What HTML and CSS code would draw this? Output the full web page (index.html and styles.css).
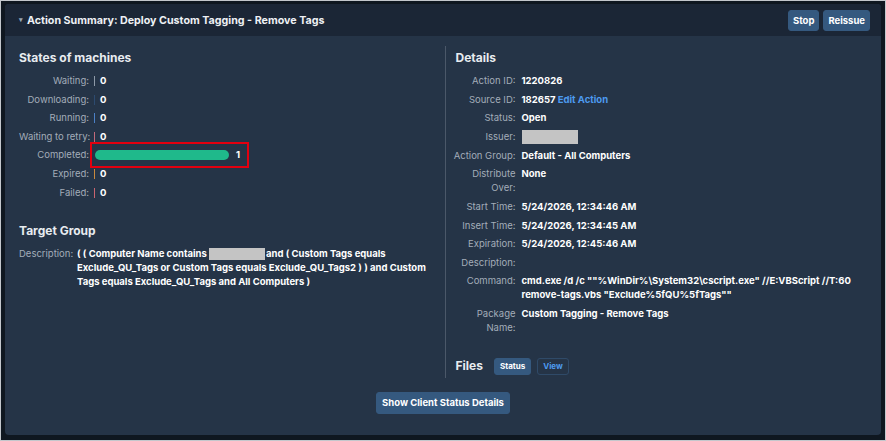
FILE: index.html
```html
<!DOCTYPE html>
<html lang="en">
<head>
  <meta charset="UTF-8">
  <meta name="viewport" content="width=device-width, initial-scale=1.0">
  <title>Action Summary</title>
  <link rel="stylesheet" href="styles.css">
</head>
<body>
  <div class="frame">
    <div class="panel">
      <div class="panel-header">
        <h1 class="panel-title"><span class="caret">&#9662;</span>Action Summary: Deploy Custom Tagging - Remove Tags</h1>
        <div class="header-buttons">
          <button class="btn">Stop</button>
          <button class="btn">Reissue</button>
        </div>
      </div>

      <div class="panel-body">
        <div class="columns">
          <div class="col col-left">
            <h2>States of machines</h2>
            <div class="states">
              <span class="label">Waiting:</span><span class="value"><i class="mark mark-waiting"></i>0</span>
              <span class="label">Downloading:</span><span class="value"><i class="mark mark-downloading"></i>0</span>
              <span class="label">Running:</span><span class="value"><i class="mark mark-running"></i>0</span>
              <span class="label">Waiting to retry:</span><span class="value"><i class="mark mark-retry"></i>0</span>
              <span class="label">Completed:</span><span class="value"><span class="highlight"><i class="bar"></i>1</span></span>
              <span class="label">Expired:</span><span class="value"><i class="mark mark-expired"></i>0</span>
              <span class="label">Failed:</span><span class="value"><i class="mark mark-failed"></i>0</span>
            </div>

            <h2 class="target-heading">Target Group</h2>
            <div class="target">
              <span class="label">Description:</span>
              <span class="value">( ( Computer Name contains <i class="redacted redacted-name"></i>and ( Custom Tags equals Exclude_QU_Tags or Custom Tags equals Exclude_QU_Tags2 ) ) and Custom Tags equals Exclude_QU_Tags and All Computers )</span>
            </div>
          </div>

          <div class="col col-right">
            <h2>Details</h2>
            <div class="details">
              <span class="label">Action ID:</span><span class="value">1220826</span>
              <span class="label">Source ID:</span><span class="value">182657 <a class="link" href="#">Edit Action</a></span>
              <span class="label">Status:</span><span class="value">Open</span>
              <span class="label">Issuer:</span><span class="value"><i class="redacted redacted-issuer"></i></span>
              <span class="label">Action Group:</span><span class="value">Default - All Computers</span>
              <span class="label">Distribute Over:</span><span class="value">None</span>
              <span class="label">Start Time:</span><span class="value">5/24/2026, 12:34:46 AM</span>
              <span class="label">Insert Time:</span><span class="value">5/24/2026, 12:34:45 AM</span>
              <span class="label">Expiration:</span><span class="value">5/24/2026, 12:45:46 AM</span>
              <span class="label">Description:</span><span class="value"></span>
              <span class="label">Command:</span><span class="value">cmd.exe /d /c ""%WinDir%\System32\cscript.exe" //E:VBScript //T:60 remove-tags.vbs "Exclude%5fQU%5fTags""</span>
              <span class="label">Package Name:</span><span class="value">Custom Tagging - Remove Tags</span>
            </div>

            <div class="files">
              <h2>Files</h2>
              <button class="btn btn-small">Status</button>
              <button class="btn btn-small btn-outline">View</button>
            </div>
          </div>
        </div>

        <div class="panel-footer">
          <button class="btn btn-wide">Show Client Status Details</button>
        </div>
      </div>
    </div>
  </div>
</body>
</html>
```

FILE: styles.css
```css
html, body {
  margin: 0;
  padding: 0;
  height: 100%;
}

body {
  background-color: #c3c7cc;
  font-family: Inter, "Noto Sans", Arial, sans-serif;
  font-size: 9.5px;
  color: #ffffff;
  padding: 1px;
  box-sizing: border-box;
}

.frame {
  height: 100%;
  background-color: #0f1720;
  padding: 3px 4px 5px 4px;
  box-sizing: border-box;
}

.panel {
  height: 100%;
  display: flex;
  flex-direction: column;
  background-color: #253447;
  border-radius: 4px;
  overflow: hidden;
}

.panel-header {
  display: flex;
  align-items: center;
  justify-content: space-between;
  height: 32px;
  padding: 0 11px 0 14px;
  background-color: #1b2636;
}

.panel-title {
  margin: 0;
  font-size: 10.7px;
  font-weight: 700;
  color: #eef1f5;
}

.caret {
  font-size: 7px;
  color: #9aa6b4;
  margin-right: 4px;
  vertical-align: 2px;
}

.header-buttons {
  display: flex;
  gap: 4px;
}

.btn {
  font-family: inherit;
  font-size: 9.5px;
  font-weight: 700;
  color: #ffffff;
  background-color: #35597f;
  border: 1px solid #35597f;
  border-radius: 3px;
  height: 21px;
  padding: 0 4px;
  cursor: pointer;
}

.btn-small {
  height: 17px;
  font-size: 8px;
  padding: 0 5px;
}

.btn-outline {
  background-color: transparent;
  border-color: #2f4a68;
  color: #4d9bf0;
}

.btn-wide {
  height: 22px;
  padding: 0 5px;
}

.panel-body {
  flex: 1;
  display: flex;
  flex-direction: column;
  padding-top: 10px;
}

.columns {
  display: flex;
}

.col {
  flex: 1;
}

.col-left {
  padding-left: 14px;
}

.col-right {
  border-left: 1px solid #4b5869;
  padding-left: 10px;
}

h2 {
  margin: 0 0 8px 0;
  font-size: 12px;
  font-weight: 700;
  color: #e8ecf0;
  line-height: 16px;
  padding-top: 4px;
}

.label {
  color: #a3adb9;
  text-align: right;
}

.value {
  font-weight: 700;
  color: #ffffff;
}

.states {
  display: grid;
  grid-template-columns: 70px 1fr;
  column-gap: 5px;
  row-gap: 4.6px;
  line-height: 14px;
}

.states .label {
  white-space: nowrap;
}

.states .value {
  display: flex;
  align-items: center;
}

.mark {
  display: inline-block;
  width: 1px;
  height: 10px;
  margin-right: 5px;
}

.mark-waiting { background-color: #8e9aa8; }
.mark-downloading { background-color: #2d4b70; }
.mark-running { background-color: #4b80c6; }
.mark-retry { background-color: #c06a7a; }
.mark-expired { background-color: #c8883e; }
.mark-failed { background-color: #c9646f; }

.highlight {
  display: inline-flex;
  align-items: center;
  border: 2px solid #e3000f;
  margin: -6px 0 -6px -4px;
  padding: 4px 7px 4px 3px;
}

.bar {
  display: inline-block;
  width: 134px;
  height: 10px;
  border-radius: 5px;
  background-color: #1fb98b;
  margin-right: 7px;
}

.target-heading {
  margin-top: 19px;
}

.target {
  display: grid;
  grid-template-columns: 51px 1fr;
  column-gap: 7px;
  line-height: 14px;
  padding-right: 14px;
}

.redacted {
  display: inline-block;
  background-color: #c4c4c4;
  vertical-align: middle;
}

.redacted-name {
  width: 56px;
  height: 12px;
  margin-right: 1px;
}

.redacted-issuer {
  width: 56px;
  height: 14px;
}

.details {
  display: grid;
  grid-template-columns: 64px 1fr;
  column-gap: 6px;
  row-gap: 4.6px;
  line-height: 14px;
  margin-left: -4px;
  padding-right: 8px;
}

.link {
  color: #4d9bf0;
  text-decoration: none;
}

.files {
  display: flex;
  align-items: center;
  gap: 6px;
  margin-top: 23px;
  padding-bottom: 3px;
}

.files h2 {
  margin: 0 5px 0 0;
  padding: 0;
}

.panel-footer {
  display: flex;
  justify-content: center;
  padding-top: 14px;
}
```
